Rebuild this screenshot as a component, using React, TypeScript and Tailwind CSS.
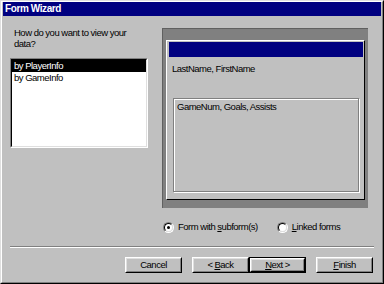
import React from 'react';

const Radio: React.FC<{ checked?: boolean }> = ({ checked }) => (
  <div className="w-[11px] h-[11px] rounded-full border border-t-[#808080] border-l-[#808080] border-r-white border-b-white">
    <div className="w-full h-full rounded-full border border-t-black border-l-black border-r-[#dfdfdf] border-b-[#dfdfdf] bg-white flex items-center justify-center">
      {checked && <div className="w-[3px] h-[3px] rounded-full bg-black" />}
    </div>
  </div>
);

interface BtnProps {
  children: React.ReactNode;
  isDefault?: boolean;
  className?: string;
}

const Button: React.FC<BtnProps> = ({ children, isDefault, className = '' }) => (
  <div className={`h-[16px] w-[57px] ${isDefault ? 'border border-black' : ''} ${className}`}>
    <div className="h-full border border-t-white border-l-white border-r-black border-b-black">
      <div className="h-full border border-t-[#dfdfdf] border-l-[#dfdfdf] border-r-[#808080] border-b-[#808080] flex items-center justify-center leading-none">
        {children}
      </div>
    </div>
  </div>
);

export default function App() {
  return (
    <div className="w-[384px] h-[284px] bg-[#c0c0c0] overflow-hidden font-['Liberation_Sans',Arial,sans-serif] text-[9.5px] tracking-[-0.5px] text-black">
      {/* window frame */}
      <div className="h-full border border-t-[#dfdfdf] border-l-[#dfdfdf] border-r-black border-b-black">
        <div className="h-full border border-t-white border-l-white border-r-[#808080] border-b-[#808080] px-px flex flex-col">
          {/* Title bar */}
          <div className="h-[14px] bg-[#000080] text-white font-bold text-[10px] tracking-[-0.4px] pl-[2px] flex items-center leading-none shrink-0">
            Form Wizard
          </div>

          {/* Main */}
          <div className="flex">
            {/* Left column */}
            <div className="ml-[7px] w-[138px] flex flex-col">
              <p className="mt-[11px] pl-[4px] leading-[11px] w-[130px]">
                How do you want to view your data?
              </p>
              <div className="mt-[9px] h-[90px] border border-t-[#808080] border-l-[#808080] border-r-white border-b-white">
                <div className="h-full border border-t-black border-l-black border-r-[#dfdfdf] border-b-[#dfdfdf] bg-white">
                  <div className="h-[12px] leading-[12px] bg-black text-white pl-[2px]">by PlayerInfo</div>
                  <div className="h-[12px] leading-[12px] pl-[2px]">by GameInfo</div>
                </div>
              </div>
            </div>

            {/* Right column */}
            <div className="ml-[14px] w-[206px] flex flex-col">
              <div className="mt-[12px] h-[180px] bg-[#808080] border-t border-l border-[#606060] pt-[11px] pl-[3px] pr-[3px] pb-[8px]">
                <div className="h-full border border-t-white border-l-white border-r-black border-b-black bg-[#c0c0c0] flex flex-col">
                  <div className="ml-[2px] mr-[1px] mt-[1px] h-[15px] bg-[#000080]" />
                  <div className="mt-[6px] pl-[5px] leading-[11px]">LastName, FirstName</div>
                  <div className="ml-[6px] mt-[24px] w-[186px] h-[94px] border border-[#808080] shadow-[inset_1px_1px_0_#ffffff,1px_1px_0_#ffffff]">
                    <div className="pt-[2px] pl-[3px] leading-[11px]">GameNum, Goals, Assists</div>
                  </div>
                </div>
              </div>

              {/* Radios */}
              <div className="mt-[13px] h-[12px] flex items-center pl-[1px]">
                <Radio checked />
                <span className="ml-[4px] leading-none">
                  Form with <span className="underline">s</span>ubform(s)
                </span>
                <div className="ml-[19px]">
                  <Radio />
                </div>
                <span className="ml-[4px] leading-none">
                  <span className="underline">L</span>inked forms
                </span>
              </div>
            </div>
          </div>

          {/* Separator */}
          <div className="ml-[7px] mt-[13px] w-[364px] border-t border-t-[#808080] border-b border-b-white" />

          {/* Buttons */}
          <div className="mt-[9px] flex">
            <Button className="ml-[122px]">Cancel</Button>
            <Button className="ml-[10px]">
              &lt; <span className="underline ml-[2px]">B</span>ack
            </Button>
            <Button isDefault>
              <span className="underline">N</span>ext &gt;
            </Button>
            <Button className="ml-[10px]">
              <span className="underline">F</span>inish
            </Button>
          </div>
        </div>
      </div>
    </div>
  );
}
